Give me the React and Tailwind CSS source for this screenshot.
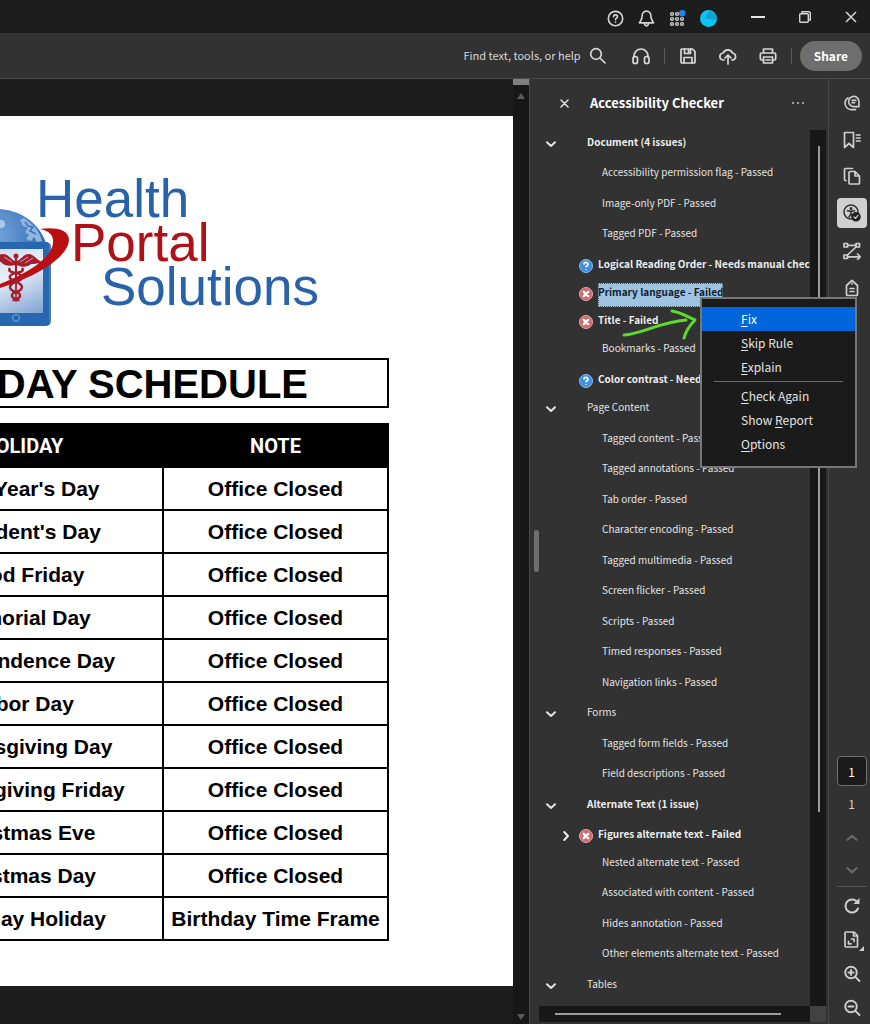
import React from "react";
import clsx from "clsx";

const HOLIDAYS = [
  ["New Year's Day", "Office Closed"],
  ["President's Day", "Office Closed"],
  ["Good Friday", "Office Closed"],
  ["Memorial Day", "Office Closed"],
  ["Independence Day", "Office Closed"],
  ["Labor Day", "Office Closed"],
  ["Thanksgiving Day", "Office Closed"],
  ["Thanksgiving Friday", "Office Closed"],
  ["Christmas Eve", "Office Closed"],
  ["Christmas Day", "Office Closed"],
  ["Birthday Holiday", "Birthday Time Frame"],
];

const RULES = [
  { type: "group", label: "Document (4 issues)", bold: true },
  { type: "rule", label: "Accessibility permission flag - Passed" },
  { type: "rule", label: "Image-only PDF - Passed" },
  { type: "rule", label: "Tagged PDF - Passed" },
  { type: "manual", label: "Logical Reading Order - Needs manual check" },
  { type: "failed", label: "Primary language - Failed", selected: true },
  { type: "failed", label: "Title - Failed" },
  { type: "rule", label: "Bookmarks - Passed" },
  { type: "manual", label: "Color contrast - Needs manual check" },
  { type: "group", label: "Page Content" },
  { type: "rule", label: "Tagged content - Passed" },
  { type: "rule", label: "Tagged annotations - Passed" },
  { type: "rule", label: "Tab order - Passed" },
  { type: "rule", label: "Character encoding - Passed" },
  { type: "rule", label: "Tagged multimedia - Passed" },
  { type: "rule", label: "Screen flicker - Passed" },
  { type: "rule", label: "Scripts - Passed" },
  { type: "rule", label: "Timed responses - Passed" },
  { type: "rule", label: "Navigation links - Passed" },
  { type: "group", label: "Forms" },
  { type: "rule", label: "Tagged form fields - Passed" },
  { type: "rule", label: "Field descriptions - Passed" },
  { type: "group", label: "Alternate Text (1 issue)", bold: true },
  { type: "failed", label: "Figures alternate text - Failed", expandable: true },
  { type: "rule", label: "Nested alternate text - Passed" },
  { type: "rule", label: "Associated with content - Passed" },
  { type: "rule", label: "Hides annotation - Passed" },
  { type: "rule", label: "Other elements alternate text - Passed" },
  { type: "group", label: "Tables" },
];

const Icon = ({ children, className = "h-[18px] w-[18px]", width = 1.7 }) => (
  <svg
    className={clsx("shrink-0", className)}
    viewBox="0 0 18 18"
    fill="none"
    stroke="currentColor"
    strokeWidth={width}
    strokeLinecap="round"
    strokeLinejoin="round"
    aria-hidden="true"
  >
    {children}
  </svg>
);

const Chevron = ({ d = "M4.5 7 9 11.2 13.5 7" }) => (
  <Icon className="h-4 w-4" width={2.3}>
    <path d={d} />
  </Icon>
);

const TitleBar = () => (
  <div className="flex h-[33px] shrink-0 items-center justify-end gap-[34px] bg-[#1d1d1d] pr-[13px] text-[#d5d5d5]">
    <div className="flex items-center gap-[14px] pt-1">
      <button aria-label="Help">
        <Icon className="h-[17px] w-[17px]">
          <circle cx="9" cy="9" r="7.6" />
          <path d="M6.9 7.2c0-1.3.9-2 2.1-2s2.1.8 2.1 1.9c0 1.5-2.1 1.6-2.1 3.1M9 12.7v.2" />
        </Icon>
      </button>
      <button aria-label="Notifications">
        <Icon className="h-[17px] w-[17px]">
          <path d="M9 1.2c-3 0-4.6 2.2-4.6 4.9 0 4-1.5 5-2.9 7.5h15c-1.4-2.5-2.9-3.5-2.9-7.5 0-2.7-1.6-4.9-4.6-4.9z" />
          <path d="M7 14c0 3.6 4 3.6 4 0" />
        </Icon>
      </button>
      <button aria-label="Apps">
        <svg className="h-[17px] w-[17px]" viewBox="0 0 17 17" aria-hidden="true">
          <g fill="none" stroke="#cfcfcf" strokeWidth="1.4">
            <circle cx="3" cy="4" r="1.4" />
            <circle cx="8" cy="4" r="1.4" />
            <circle cx="3" cy="9" r="1.4" />
            <circle cx="8" cy="9" r="1.4" />
            <circle cx="13" cy="9" r="1.4" />
            <circle cx="3" cy="14" r="1.4" />
            <circle cx="8" cy="14" r="1.4" />
            <circle cx="13" cy="14" r="1.4" />
          </g>
          <circle cx="13.3" cy="3.3" r="3.3" fill="#2680eb" />
        </svg>
      </button>
      <button aria-label="Account">
        <svg className="h-[17px] w-[17px]" viewBox="0 0 17 17" aria-hidden="true">
          <circle cx="8.5" cy="8.5" r="8.5" fill="#09c6f9" />
          <path d="M9 1a8 8 0 0 1 7.8 9L5 8.5z" fill="#0ea2cc" />
        </svg>
      </button>
    </div>
    <button aria-label="Minimize">
      <div className="h-[2px] w-[14px] bg-[#e6e6e6]" />
    </button>
    <button aria-label="Restore">
      <svg className="h-3 w-3" viewBox="0 0 12 12" fill="none" stroke="currentColor" strokeWidth="1.4" aria-hidden="true">
        <rect x=".7" y="2.7" width="8.6" height="8.6" rx="1" />
        <path d="M3 2.5V.7h6.8a1.5 1.5 0 0 1 1.5 1.5V9H9.5" />
      </svg>
    </button>
    <button aria-label="Close">
      <svg className="h-3 w-3" viewBox="0 0 12 12" stroke="currentColor" strokeWidth="1.5" aria-hidden="true">
        <path d="M1 1l10 10M11 1 1 11" />
      </svg>
    </button>
  </div>
);

const ToolBar = () => (
  <div className="flex h-[46px] shrink-0 items-center justify-end border-b border-[#4b4b4b] bg-[#323232] pr-2 text-[#d8d8d8]">
    <button className="mr-[25px] flex items-center gap-2 text-[11px]">
      Find text, tools, or help
      <Icon>
        <circle cx="7" cy="7" r="5.3" />
        <path d="m11 11 5 5" />
      </Icon>
    </button>
    <button aria-label="Read aloud">
      <Icon>
        <path d="M2 10.5V9a7 7 0 0 1 14 0v1.5" />
        <rect x="1" y="9.5" width="4.5" height="7" rx="2" />
        <rect x="12.5" y="9.5" width="4.5" height="7" rx="2" />
      </Icon>
    </button>
    <div className="mx-[14px] h-4 w-px bg-[#5c5c5c]" />
    <div className="flex items-center gap-[22px]">
      <button aria-label="Save">
        <Icon>
          <path d="M2 3a1 1 0 0 1 1-1h10.5L16 4.5V15a1 1 0 0 1-1 1H3a1 1 0 0 1-1-1z" />
          <path d="M5.5 2v4.500h6V2M5 16v-5.500h8V16M9.500 3v2" />
        </Icon>
      </button>
      <button aria-label="Upload to cloud">
        <Icon>
          <path d="M5 13H4.500a3.500 3.500 0 0 1-.3-7A5 5 0 0 1 13.500 6a3.600 3.600 0 0 1 .5 7H13" />
          <path d="M9 17V8.500M6 11l3-3 3 3" />
        </Icon>
      </button>
      <button aria-label="Print">
        <Icon>
          <path d="M4.500 6V2h9v4M4.500 13H2.800A1.500 1.500 0 0 1 1.300 11.500V7.500A1.500 1.500 0 0 1 2.800 6h12.400a1.500 1.500 0 0 1 1.500 1.500v4a1.500 1.500 0 0 1-1.500 1.500H13.500" />
          <path d="M4.500 10h9v6h-9zM7 13h4" />
        </Icon>
      </button>
    </div>
    <div className="mr-2 ml-[14px] h-4 w-px bg-[#5c5c5c]" />
    <button className="h-[30px] rounded-full bg-[#6e6e6e] px-[14px] text-xs font-bold text-white">Share</button>
  </div>
);

const Logo = () => (
  <svg
    className="mr-[65px] h-[160px] w-[384px] shrink-0 font-normal"
    viewBox="-60 170 384 160"
    role="img"
    aria-label="Health Portal Solutions"
    fontFamily="'Liberation Sans', Arial, sans-serif"
    fontSize="53"
  >
    <defs>
      <radialGradient id="globe" cx=".45" cy=".25" r=".6">
        <stop offset="0" stopColor="#78a7dc" />
        <stop offset="1" stopColor="#2a65ae" />
      </radialGradient>
      <linearGradient id="screen" x1="1" y1="1" x2=".4" y2="0">
        <stop offset="0" stopColor="#7fa3d3" />
        <stop offset=".6" stopColor="#e9eff8" />
        <stop offset="1" stopColor="#c9d8ec" />
      </linearGradient>
    </defs>
    <circle cx="-2" cy="260" r="51" fill="url(#globe)" />
    <circle cx="1" cy="224" r="4" fill="#a9c8ea" />
    <path d="M20 220l4-2 5 4 6 5 5 8 2 6-5 1-3-5-3 4-5-2 3-4-4-3 3-4-5-2z" fill="#8fb5df" />
    <path d="M25 222l3 4 5 1-3 4 6 3" fill="none" stroke="#3b76b9" strokeWidth="1.5" />
    <rect x="-50" y="242" width="101" height="84" rx="5" fill="#2766b0" />
    <path d="M50 245v78" stroke="#6a95cb" strokeWidth="1" />
    <rect x="-43" y="249" width="86" height="64" fill="url(#screen)" />
    <circle cx="16" cy="318" r="3.5" fill="none" stroke="#84a9d6" strokeWidth="1" />
    <path
      d="M40 229C52 227 69 228 69 240C68 257 38 276 0 288L-20 292V290L0 284C32 272 52 256 53 243C54 235 49 231 40 229Z"
      fill="#b90f10"
    />
    <g fill="#a51c2a">
      <path d="M15 261C11 260 9 254 3 254C-1 254-5 257-9 256C-5 260-2 261 1 262C3 265 9 267 15 265Z" />
      <path d="M17 261C21 260 23 254 29 254C33 254 37 260 42 262C37 264 33 264 31 264C28 267 22 268 17 265Z" />
      <circle cx="16" cy="256" r="2.5" />
      <path d="M14.800 257h2.400l-.5 45h-1.400z" />
    </g>
    <g fill="none" stroke="#a51c2a" strokeWidth="2.4">
      <path d="M10 268c-4 6 9 3 12 8 2 6-12 5-12 11s11 4 10 9c0 3-6 2-7 5" />
      <path d="M22 268c4 6-9 3-12 8-2 6 12 5 12 11s-11 4-10 9c0 3 6 2 7 5" />
    </g>
    <path d="M4 257l8 5M28 257l-8 5M33 258l-8 5" stroke="#d9c4d2" strokeWidth=".8" />
    <text x="36" y="217" fill="#2862a8">Health</text>
    <text x="71" y="261" fill="#b01116">Portal</text>
    <text x="101" y="305" fill="#2862a8">Solutions</text>
  </svg>
);

const DocumentPage = () => (
  <main className="min-w-0 flex-1 overflow-hidden bg-[#1d1d1d] pt-[37px]">
    <div className="flex h-[870px] flex-col items-end overflow-hidden bg-white pt-[54px] pr-[124px] font-['Liberation_Sans',Arial,sans-serif] font-bold text-black">
      <Logo />
      <h1 className="mt-7 w-[508px] shrink-0 border-2 border-black pt-[2px] pr-[79px] text-right text-[40px] leading-[44px] whitespace-nowrap">
        HOLIDAY SCHEDULE
      </h1>
      <table className="mt-[15px] w-[508px] shrink-0 table-fixed border-collapse text-center text-[21px]">
        <thead>
          <tr className="h-[43px] bg-black font-['Roboto',sans-serif] text-xl text-white">
            <th className="w-[281px] border-2 border-black">HOLIDAY</th>
            <th className="border-2 border-black">NOTE</th>
          </tr>
        </thead>
        <tbody>
          {HOLIDAYS.map(([day, note]) => (
            <tr key={day} className="h-[43px]">
              <td className="border-2 border-black whitespace-nowrap">{day}</td>
              <td className="border-2 border-black whitespace-nowrap">{note}</td>
            </tr>
          ))}
        </tbody>
      </table>
    </div>
  </main>
);

const DocumentScrollbar = () => (
  <div className="flex w-4 shrink-0 flex-col items-center justify-between bg-[#171717] pb-1 text-[#5a5a5a]">
    <div className="flex w-full flex-col items-center gap-2">
      <div className="h-[6px] w-full bg-[#7f7f7f]" />
      <svg className="h-[6px] w-2" viewBox="0 0 8 6" fill="currentColor" aria-hidden="true">
        <path d="M4 0l4 6H0z" />
      </svg>
    </div>
    <svg className="h-[6px] w-2" viewBox="0 0 8 6" fill="currentColor" aria-hidden="true">
      <path d="M4 6l4-6H0z" />
    </svg>
  </div>
);

const StatusIcon = ({ type }) => (
  <svg className="h-[14px] w-[14px] shrink-0" viewBox="0 0 14 14" aria-hidden="true">
    {type === "failed" ? (
      <>
        <circle cx="7" cy="7" r="6.5" fill="#cf6a70" stroke="#e9a7aa" />
        <path d="M4.800 4.800l4.400 4.400M9.200 4.800l-4.400 4.400" stroke="#fff" strokeWidth="2.4" strokeLinecap="round" />
      </>
    ) : (
      <>
        <circle cx="7" cy="7" r="6.5" fill="#3f8fdf" stroke="#8bbdee" />
        <path
          d="M5 5.400c0-2.600 4-2.600 4-.2 0 1.500-2 1.500-2 3M7 10v.8"
          fill="none"
          stroke="#fff"
          strokeWidth="1.7"
        />
      </>
    )}
  </svg>
);

const RuleRow = ({ rule }) => {
  if (rule.type === "group") {
    return (
      <li role="treeitem" aria-expanded="true" className="flex h-[30px] items-start pl-[13px] even:h-[31px]">
        <button aria-label={"Collapse " + rule.label} className="mt-[3px] mr-7">
          <Chevron />
        </button>
        <span className={clsx(rule.bold && "font-bold text-[#ededed]")}>{rule.label}</span>
      </li>
    );
  }
  if (rule.type === "rule") {
    return (
      <li role="treeitem" className="h-[30px] pl-[72px] even:h-[31px]">
        {rule.label}
      </li>
    );
  }
  return (
    <li
      role="treeitem"
      aria-selected={!!rule.selected}
      className={clsx("flex h-7 items-start font-bold text-[#ededed]", rule.expandable ? "pl-7" : "pl-[49px]")}
    >
      {rule.expandable && (
        <button aria-label={"Expand " + rule.label} className="mt-[3px] mr-[5px]">
          <Chevron d="M7 4.500 11.200 9 7 13.500" />
        </button>
      )}
      <span className="mt-1 mr-[5px]">
        <StatusIcon type={rule.type} />
      </span>
      <span
        className={clsx(
          rule.selected && "h-6 bg-[#9dc3e0] text-[#10202c] outline-1 -outline-offset-1 outline-[#44596a] outline-dotted"
        )}
      >
        {rule.label}
      </span>
    </li>
  );
};

const MenuItem = ({ before = "", mnemonic, after, active }) => (
  <button
    role="menuitem"
    className={clsx("h-6 w-full pl-[39px] text-left text-xs", active ? "bg-[#0265dc] text-white" : "text-[#e4e4e4]")}
  >
    {before}
    <span className="underline underline-offset-2">{mnemonic}</span>
    {after}
  </button>
);

const ContextMenu = () => (
  <div
    role="menu"
    className="absolute top-[218px] left-[170px] z-10 flex w-[157px] flex-col border-2 border-[#767676] bg-[#1b1b1b] pt-2 pb-[10px]"
  >
    <MenuItem mnemonic="F" after="ix" active />
    <MenuItem mnemonic="S" after="kip Rule" />
    <MenuItem mnemonic="E" after="xplain" />
    <div className="mx-3 my-[2px] h-px bg-[#6b6b6b]" />
    <MenuItem mnemonic="C" after="heck Again" />
    <MenuItem before="Show " mnemonic="R" after="eport" />
    <MenuItem mnemonic="O" after="ptions" />
  </div>
);

const CheckerPanel = () => (
  <aside className="relative flex w-[300px] shrink-0 flex-col border-x border-x-[#484848] bg-[#323232] text-[10px] text-[#e2e2e2]">
    <div className="flex h-[51px] shrink-0 items-center pr-6 pb-[3px] pl-[30px]">
      <button aria-label="Close panel">
        <Icon className="h-[9px] w-[9px]" width={3}>
          <path d="M2 2l14 14M16 2 2 16" />
        </Icon>
      </button>
      <h2 className="ml-[21px] flex-1 text-[13px] font-bold text-white">Accessibility Checker</h2>
      <button aria-label="Panel options" className="flex gap-[3px]">
        <span className="h-[2px] w-[2px] rounded-full bg-[#c4c4c4]" />
        <span className="h-[2px] w-[2px] rounded-full bg-[#c4c4c4]" />
        <span className="h-[2px] w-[2px] rounded-full bg-[#c4c4c4]" />
      </button>
    </div>
    <div className="flex min-h-0 flex-1 pr-[2px]">
      <ul role="tree" aria-label="Checker results" className="min-w-0 flex-1 overflow-hidden pt-[3px] leading-[18px] whitespace-nowrap">
        {RULES.map((rule) => (
          <RuleRow key={rule.label} rule={rule} />
        ))}
      </ul>
      <div className="flex w-4 shrink-0 justify-center bg-[#181818] pt-4 pb-[194px] pl-[2px]">
        <div className="w-[2px] bg-[#9c9c9c]" />
      </div>
    </div>
    <div className="mb-[2px] flex h-4 shrink-0 pr-[2px] pl-[9px]">
      <div className="flex flex-1 items-center bg-[#181818] pr-[29px] pl-4">
        <div className="h-[2px] flex-1 bg-[#9c9c9c]" />
      </div>
      <div className="w-4 bg-[#424242]" />
    </div>
    <div className="absolute top-[451px] left-1 h-[42px] w-[5px] rounded-full bg-[#6f6f6f]" />
    <svg
      className="absolute top-[226px] left-[90px] z-20 h-9 w-20"
      viewBox="620 305 80 36"
      fill="none"
      stroke="#5cdb2b"
      strokeWidth="3"
      strokeLinecap="round"
      strokeLinejoin="round"
      aria-hidden="true"
    >
      <path d="M624 335C642 334 660 322 686 320" />
      <path d="M672 311C680 312 688 317 695 320C690 325 686 331 684 338" />
    </svg>
    <ContextMenu />
  </aside>
);

const SideRail = () => (
  <nav aria-label="Panels" className="flex w-[41px] shrink-0 flex-col items-center justify-between bg-[#323232] pb-[7px] pl-1 text-[#cecece]">
    <div className="flex flex-col items-center pt-[9px]">
      <button aria-label="Comments" className="flex h-[37px] w-[30px] items-center justify-center pb-2">
        <Icon className="h-4 w-4" width={1.8}>
          <path d="M11 1.500a5.800 5.800 0 0 0 0 11.600h5.800V7.300A5.800 5.800 0 0 0 11 1.500z" />
          <path d="M4.500 3.300A7.200 7.200 0 0 0 8.500 16.500h4.500M9 6h4.500M9 8.800h3" />
        </Icon>
      </button>
      <button aria-label="Bookmarks" className="flex h-[37px] w-[30px] items-center justify-center pb-2">
        <Icon>
          <path d="M1.500 1.500h9v15L6 12.500l-4.500 4zM13.500 4H17M13.500 7H17M13.500 10H17" />
        </Icon>
      </button>
      <button aria-label="Pages" className="flex h-[36px] w-[30px] items-center justify-center pb-2">
        <Icon>
          <path d="M6 5.500a1 1 0 0 1 1-1h5l4.500 4.500v7a1 1 0 0 1-1 1H7a1 1 0 0 1-1-1zM12 4.500V9h4.500" />
          <path d="M3 13.500H2.500a1 1 0 0 1-1-1V2.500a1 1 0 0 1 1-1H9.500" />
        </Icon>
      </button>
      <button aria-label="Accessibility checker" className="flex h-[30px] w-[30px] items-center justify-center rounded bg-[#d0d0d0] text-[#333333]">
        <Icon className="h-[18px] w-[18px]" width={1.6}>
          <circle cx="8" cy="8" r="7" />
          <circle cx="8" cy="4.500" r=".7" fill="currentColor" />
          <path d="M4.500 6.800l3.500.6 3.500-.6M8 7v3l-2 3M8 10l1.500 2" />
          <circle cx="13" cy="12.800" r="4" fill="#222222" stroke="#222222" />
          <path d="M11 12.800l1.500 1.500 2.500-3" stroke="#d0d0d0" strokeWidth="1.2" />
        </Icon>
      </button>
      <button aria-label="Reading order" className="flex h-[37px] w-[30px] items-center justify-center pt-2">
        <Icon>
          <rect x="1" y="1.500" width="3.500" height="3.500" />
          <rect x="13" y="1.500" width="3.500" height="3.500" />
          <rect x="1" y="13" width="3.500" height="3.500" />
          <path d="M4.500 3.300H13M13 5 4.500 13M4.500 14.800H17M14.500 12l2.700 2.800-2.700 2.700" />
        </Icon>
      </button>
      <button aria-label="Tags" className="flex h-[37px] w-[30px] items-center justify-center pt-2">
        <Icon>
          <path d="M3.500 6.500 9 1.500l5.500 5v9a1 1 0 0 1-1 1h-9a1 1 0 0 1-1-1zM9 4.500v.5M7 9.500h4M7 12.500h4" />
        </Icon>
      </button>
    </div>
    <div className="flex flex-col items-center">
      <input
        aria-label="Page number"
        defaultValue="1"
        className="h-[30px] w-[30px] rounded border border-[#707070] bg-[#1b1b1b] text-center text-xs text-white"
      />
      <span className="mt-2 text-xs leading-5">1</span>
      <div className="mt-4 flex flex-col gap-4 text-[#6c6c6c]">
        <button aria-label="Previous page">
          <Chevron d="M4 11 9 6.500 14 11" />
        </button>
        <button aria-label="Next page">
          <Chevron d="M4 7 9 11.500 14 7" />
        </button>
      </div>
      <div className="mt-2 h-px w-[30px] bg-[#565656]" />
      <div className="mt-[10px] flex flex-col gap-4">
        <button aria-label="Rotate">
          <Icon width={2}>
            <path d="M14.500 5.500A6.500 6.500 0 1 0 15 11.500" />
            <path d="M16.500 1v6h-6z" fill="currentColor" stroke="none" />
          </Icon>
        </button>
        <button aria-label="Fit page" className="relative">
          <Icon>
            <path d="M2 2a1 1 0 0 1 1-1h8l3.500 3.500v10.500a1 1 0 0 1-1 1H3a1 1 0 0 1-1-1zM10.500 1.500V5h3.500" />
            <path d="M8.500 8H11v2.500M8 12.800H5.500v-2.500" />
          </Icon>
          <svg className="absolute -right-[3px] -bottom-[2px] h-[5px] w-[5px]" viewBox="0 0 5 5" fill="currentColor" aria-hidden="true">
            <path d="M5 0v5H0z" />
          </svg>
        </button>
        <button aria-label="Zoom in">
          <Icon width={1.9}>
            <circle cx="8" cy="7.500" r="5.800" />
            <path d="m12.300 11.800 4.200 4.200M5.500 7.500h5M8 5v5" />
          </Icon>
        </button>
        <button aria-label="Zoom out">
          <Icon width={1.9}>
            <circle cx="8" cy="7.500" r="5.800" />
            <path d="m12.300 11.800 4.200 4.200M5.500 7.500h5" />
          </Icon>
        </button>
      </div>
    </div>
  </nav>
);

const App = () => {
  return (
    <div className="flex h-screen flex-col overflow-hidden bg-[#1d1d1d] font-['Noto_Sans_CJK_SC',sans-serif]">
      <TitleBar />
      <ToolBar />
      <div className="flex min-h-0 flex-1">
        <DocumentPage />
        <DocumentScrollbar />
        <CheckerPanel />
        <SideRail />
      </div>
    </div>
  );
};

export default App;
